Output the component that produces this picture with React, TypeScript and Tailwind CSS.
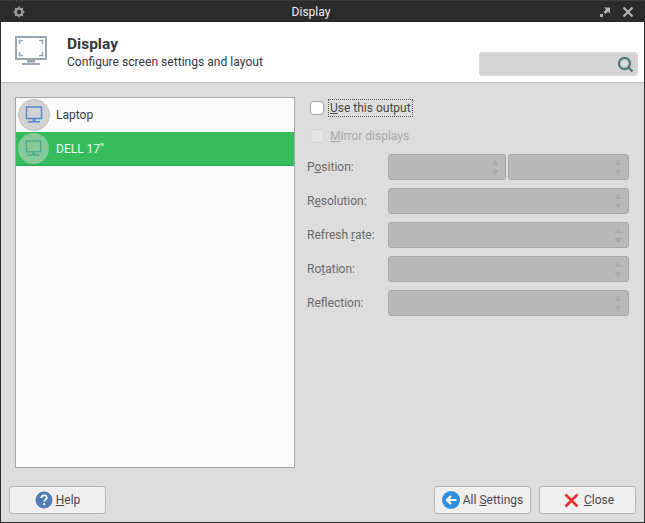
import { ReactNode } from "react";

const font = { fontFamily: 'Roboto, "Noto Sans", sans-serif' };

function MonitorIcon({ color, className }: { color: string; className?: string }) {
  return (
    <svg viewBox="0 0 20 20" className={className} fill="none">
      <rect x="2.5" y="2" width="15" height="11.5" stroke={color} strokeWidth="1.5" />
      <rect x="8.5" y="14" width="3" height="2" fill={color} />
      <rect x="4" y="16" width="12" height="1.6" fill={color} />
    </svg>
  );
}

function Spin({ className }: { className: string }) {
  return (
    <div className={`h-[26px] rounded-[3px] bg-[#b9b9b9] border border-[#a8a8a8] flex items-center justify-end pr-[7px] ${className}`}>
      <div className="flex flex-col gap-[5px]">
        <svg width="6" height="5" viewBox="0 0 6 5" className="block"><path d="M3 .5 5.500 4.500H.5Z" fill="#b0b0b0" stroke="#a4a4a4" /></svg>
        <svg width="6" height="5" viewBox="0 0 6 5" className="block"><path d="M.5.5h5L3 4.500Z" fill="#adadad" stroke="#a4a4a4" /></svg>
      </div>
    </div>
  );
}

function Row({ label, children }: { label: ReactNode; children: ReactNode }) {
  return (
    <div className="flex items-center h-[26px]">
      <div className="w-[81px] text-[#6a6a6a] text-[12px]">{label}</div>
      <div className="flex-1 flex gap-[2px]">{children}</div>
    </div>
  );
}

function Button({ icon, children, className }: { icon: ReactNode; children: ReactNode; className?: string }) {
  return (
    <button className={`w-[97px] h-[28px] rounded-[3px] border border-[#b4b4b4] bg-[#efefef] text-[#4a4a4a] text-[12px] flex items-center justify-center gap-[3px] ${className ?? ""}`}>
      {icon}
      <span>{children}</span>
    </button>
  );
}

export default function App() {
  return (
    <div style={font} className="w-[645px] h-[523px] flex flex-col bg-[#dddddd] border-x border-b border-[#2b2b2b] overflow-hidden">
      <div className="h-[22px] shrink-0 bg-[#2b2b2b] border-t border-[#3c3c3c] flex items-center justify-between px-[12px] text-[12px] text-[#eeeeee]">
        <svg width="12" height="12" viewBox="0 0 12 12">
          <circle cx="6" cy="6" r="3.4" fill="none" stroke="#9c9c9c" strokeWidth="2.4" />
          <path d="M6 .5v2M6 9.500v2M.5 6h2M9.500 6h2M2.100 2.100l1.400 1.400M8.500 8.500l1.400 1.400M9.900 2.100 8.500 3.500M3.500 8.500l-1.400 1.400" stroke="#9c9c9c" strokeWidth="1.600" />
        </svg>
        <span className="-ml-[2px]">Display</span>
        <div className="flex items-center gap-[11px] -mr-[2px]">
          <svg width="12" height="12" viewBox="0 0 12 12">
            <path d="M5 1.500h6v6L9 5.500 6.500 8 4.500 6 7 3.500Z" fill="#b5b5b5" />
            <rect x="1" y="8" width="3" height="3" fill="#b5b5b5" />
          </svg>
          <svg width="12" height="12" viewBox="0 0 12 12">
            <path d="M1.500 1.500l9 9M10.500 1.500l-9 9" stroke="#b5b5b5" strokeWidth="2" />
          </svg>
        </div>
      </div>

      <div className="h-[61px] shrink-0 bg-white border-b border-[#c0c0c0] flex items-center pl-[14px] pr-[6px]">
        <svg width="34" height="34" viewBox="0 0 34 34" fill="none" className="shrink-0 mt-[2px]">
          <rect x="1" y="1" width="30" height="22" stroke="#9aa7b1" strokeWidth="2" />
          <path d="M4.500 8V4.500H8M24 4.500h3.500V8M27.500 16v3.500H24M8 19.500H4.500V16" stroke="#9aa7b1" strokeWidth="1.500" />
          <rect x="12" y="24" width="8" height="2.500" fill="#9aa7b1" />
          <rect x="7" y="27" width="18" height="2" fill="#9aa7b1" />
        </svg>
        <div className="ml-[18px] flex flex-col text-[#33393f]">
          <span className="text-[15.5px] leading-[20px] font-bold">Display</span>
          <span className="text-[12.1px] leading-[17px]">Configure screen settings and layout</span>
        </div>
        <div className="ml-auto self-end mb-[6px] w-[159px] h-[24px] rounded-[3px] bg-[#d4d4d4] border border-[#dadada] flex items-center justify-end pr-[3px]">
          <svg width="17" height="17" viewBox="0 0 17 17" fill="none">
            <circle cx="7.500" cy="7.500" r="5.600" fill="#c3c9c7" stroke="#4f7f7b" strokeWidth="2.200" />
            <circle cx="7.500" cy="7.500" r="3" fill="#dde0df" />
            <path d="M11.500 11.500 15.500 15.500" stroke="#4f7f7b" strokeWidth="2.400" />
          </svg>
        </div>
      </div>

      <div className="flex-1 flex pl-[14px] pr-[15px] pt-[14px] gap-[12px]">
        <div className="w-[280px] h-[371px] border border-[#a5a5a5] bg-[#fbfbfb] flex flex-col">
          <div className="h-[34px] flex items-center pl-[2px] text-[12px] text-[#3a3a3a] gap-[6px]">
            <div className="w-[32px] h-[32px] rounded-full bg-[#d2d2d2] border border-[#c2c2c2] flex items-center justify-center">
              <MonitorIcon color="#5b8bd0" className="w-[20px] h-[20px]" />
            </div>
            <span>Laptop</span>
          </div>
          <div className="h-[34px] flex items-center pl-[2px] text-[12px] text-[#eefbf0] bg-[#35bd5c] border-b border-[#2ea651] gap-[7px]">
            <div className="w-[31px] h-[31px] rounded-full bg-[#86c99a] flex items-center justify-center">
              <MonitorIcon color="#4fa98a" className="w-[19px] h-[19px]" />
            </div>
            <span>DELL 17"</span>
          </div>
        </div>

        <div className="flex-1 flex flex-col">
          <div className="h-[26px] -mt-[2px] pl-[3px] flex items-center gap-[4px] text-[12px] text-[#4a4a4a]">
            <div className="w-[14px] h-[14px] rounded-[3px] bg-white border border-[#9f9f9f]" />
            <span className="border border-dotted border-[#555555] leading-[16px] px-px"><u>U</u>se this output</span>
          </div>
          <div className="h-[26px] mt-[2px] pl-[3px] flex items-center gap-[6px] text-[12px] text-[#a9a9a9]">
            <div className="w-[14px] h-[14px] rounded-[3px] bg-[#e6e6e6] border border-[#d2d2d2]" />
            <span><u>M</u>irror displays</span>
          </div>
          <div className="flex flex-col gap-[8px] mt-[5px]">
            <Row label={<>P<u>o</u>sition:</>}>
              <Spin className="w-[118px]" />
              <Spin className="flex-1" />
            </Row>
            <Row label={<>R<u>e</u>solution:</>}><Spin className="flex-1" /></Row>
            <Row label={<>Refresh <u>r</u>ate:</>}><Spin className="flex-1" /></Row>
            <Row label={<>Ro<u>t</u>ation:</>}><Spin className="flex-1" /></Row>
            <Row label={<>Ref<u>l</u>ection:</>}><Spin className="flex-1" /></Row>
          </div>
        </div>
      </div>

      <div className="h-[36px] shrink-0 flex items-start pl-[8px] pr-[8px]">
        <Button
          icon={
            <svg width="18" height="18" viewBox="0 0 18 18">
              <circle cx="9" cy="9" r="8.500" fill="#4f7cb4" />
              <path d="M6.300 7c0-1.700 1.200-2.700 2.800-2.700s2.700 1 2.700 2.300c0 2-2.500 2-2.500 3.900" fill="none" stroke="#fff" strokeWidth="1.800" />
              <circle cx="9.200" cy="13.200" r="1.100" fill="#fff" />
            </svg>
          }
        >
          <u>H</u>elp
        </Button>
        <Button
          className="ml-auto"
          icon={
            <svg width="18" height="18" viewBox="0 0 18 18">
              <circle cx="9" cy="9" r="9" fill="#2f8fdd" />
              <path d="M14.500 9H6M9 5 5 9l4 4" fill="none" stroke="#fff" strokeWidth="2.200" />
            </svg>
          }
        >
          All <u>S</u>ettings
        </Button>
        <Button
          className="ml-[8px] gap-[5px] pl-[3px]"
          icon={
            <svg width="15" height="15" viewBox="0 0 15 15">
              <path d="M1.500 1.500l12 12M13.500 1.500l-12 12" stroke="#e0312f" strokeWidth="2.600" />
            </svg>
          }
        >
          <u>C</u>lose
        </Button>
      </div>
    </div>
  );
}
